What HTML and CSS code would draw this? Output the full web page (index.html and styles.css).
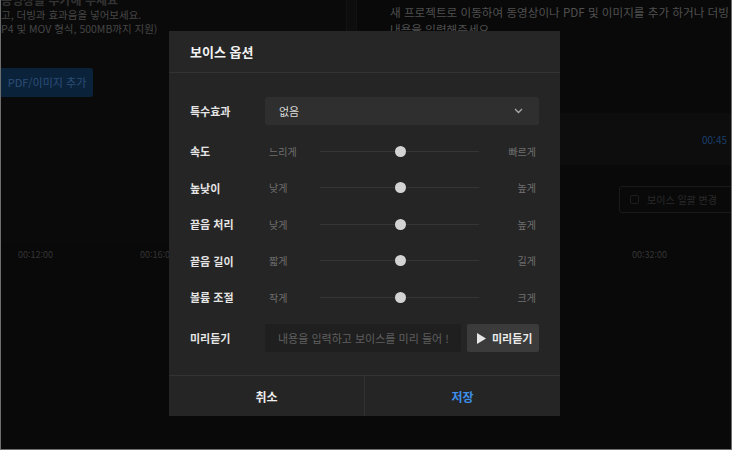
FILE: index.html
```html
<!DOCTYPE html>
<html lang="ko">
<head>
<meta charset="utf-8">
<title>보이스 옵션</title>
<link rel="stylesheet" href="styles.css">
</head>
<body>
<div class="app">
  <div class="top">
    <div class="left">
      <div class="cut-title">동영상을 추가해 주세요</div>
      <div class="bg-text">고, 더빙과 효과음을 넣어보세요.</div>
      <div class="bg-text">P4 및 MOV 형식, 500MB까지 지원)</div>
      <div class="bg-btn">PDF/이미지 추가</div>
    </div>
    <div class="divider"></div>
    <div class="right">
      <div class="bg-text2">새 프로젝트로 이동하여 동영상이나 PDF 및 이미지를 추가 하거나 더빙</div>
      <div class="bg-text2">내용을 입력해주세요.</div>
      <div class="band"><span class="time-blue">00:45</span></div>
      <div class="bulk-btn"><span class="bulk-ico"></span>보이스 일괄 변경</div>
    </div>
  </div>
  <div class="timeline">
    <span class="tl tl1">00:12:00</span>
    <span class="tl tl2">00:16:00</span>
    <span class="tl tl3">00:32:00</span>
  </div>

  <div class="modal">
    <div class="modal-head">보이스 옵션</div>
    <div class="modal-body">
      <div class="row row-select">
        <div class="label">특수효과</div>
        <div class="select">
          <span>없음</span>
          <svg class="chev" width="9" height="6" viewBox="0 0 9 6"><path d="M1 1 L4.5 4.5 L8 1" fill="none" stroke="#aaa" stroke-width="1.3"/></svg>
        </div>
      </div>
      <div class="row row-slider">
        <div class="label">속도</div>
        <div class="slider"><span class="s-min">느리게</span><div class="track"><span class="knob"></span></div><span class="s-max">빠르게</span></div>
      </div>
      <div class="row row-slider">
        <div class="label">높낮이</div>
        <div class="slider"><span class="s-min">낮게</span><div class="track"><span class="knob"></span></div><span class="s-max">높게</span></div>
      </div>
      <div class="row row-slider">
        <div class="label">끝음 처리</div>
        <div class="slider"><span class="s-min">낮게</span><div class="track"><span class="knob"></span></div><span class="s-max">높게</span></div>
      </div>
      <div class="row row-slider">
        <div class="label">끝음 길이</div>
        <div class="slider"><span class="s-min">짧게</span><div class="track"><span class="knob"></span></div><span class="s-max">길게</span></div>
      </div>
      <div class="row row-slider">
        <div class="label">볼륨 조절</div>
        <div class="slider"><span class="s-min">작게</span><div class="track"><span class="knob"></span></div><span class="s-max">크게</span></div>
      </div>
      <div class="row row-preview">
        <div class="label">미리듣기</div>
        <div class="preview">
          <div class="preview-input">내용을 입력하고 보이스를 미리 들어 !</div>
          <div class="preview-btn">
            <svg width="9" height="11" viewBox="0 0 9 11"><path d="M0 0 L9 5.5 L0 11 Z" fill="#e8e8e8"/></svg>
            <span>미리듣기</span>
          </div>
        </div>
      </div>
    </div>
    <div class="modal-foot">
      <div class="foot-btn cancel">취소</div>
      <div class="foot-btn save">저장</div>
    </div>
  </div>
</div>
</body>
</html>
```

FILE: styles.css
```css
* { box-sizing: border-box; margin: 0; padding: 0; }
html, body { width: 732px; height: 450px; overflow: hidden; background: #0a0a0a; }
body { font-family: "Noto Sans CJK KR", "Noto Sans", sans-serif; }

.app {
  position: relative;
  width: 732px;
  height: 450px;
  background: #090909;
  border-left: 1px solid #6e6e6e;
  border-right: 1px solid #6e6e6e;
  border-bottom: 1px solid #6e6e6e;
  overflow: hidden;
}

.top { display: flex; height: 242px; }
.left { width: 345px; background: #0a0a0a; display: flex; flex-direction: column; }
.cut-title { margin-top: -7px; height: 15px; font-size: 12px; font-weight: 700; color: #333; line-height: 14px; overflow: hidden; white-space: nowrap; }
.bg-text { font-size: 10.5px; line-height: 14px; color: #464646; white-space: nowrap; }
.bg-btn {
  margin-top: 32px; width: 92px; height: 29px;
  background: #0b223b; color: #2b4f78;
  font-size: 11px; line-height: 29px; text-align: center;
  border-radius: 0 3px 3px 0;
}
.divider { width: 11px; background: #0d0d0d; border-left: 1px solid #121212; border-right: 1px solid #121212; }
.right { flex: 1; display: flex; flex-direction: column; padding-left: 33px; }
.bg-text2 { font-size: 11.6px; line-height: 17px; color: #505050; white-space: nowrap; }
.bg-text2:first-child { margin-top: 4px; }
.band {
  margin-top: 75px; margin-left: -33px; height: 52px;
  background: #0d0d0d; display: flex; align-items: center; justify-content: flex-end;
}
.time-blue { font-size: 10px; color: #1b3f6a; margin-right: 4px; }
.bulk-btn {
  align-self: flex-end; margin-top: 21px; margin-right: -12px;
  width: 124px; height: 27px; border: 1px solid #1a1a1a; border-radius: 3px;
  font-size: 10px; color: #2a2a2a; display: flex; align-items: center; padding-left: 10px; gap: 8px;
}
.bulk-ico { width: 9px; height: 9px; border: 1px solid #1e1e1e; border-radius: 2px; }

.timeline { position: relative; height: 26px; font-size: 9px; color: #353535; }
.tl { position: absolute; top: 6px; }
.tl1 { left: 17px; }
.tl2 { left: 139px; }
.tl3 { left: 631px; }

/* Modal */
.modal {
  position: absolute; left: 168px; top: 31px;
  width: 391px; height: 385px;
  background: #252525;
  display: flex; flex-direction: column;
}
.modal-head {
  height: 42px; padding-left: 21px;
  font-size: 13px; font-weight: 700; color: #f2f2f2;
  line-height: 41px;
  border-bottom: 1px solid #333;
  background: #262626;
}
.modal-body { flex: 1; padding: 24px 21px 0 21px; display: flex; flex-direction: column; }
.row { display: flex; align-items: center; }
.label { width: 75px; flex: none; font-size: 11px; font-weight: 700; color: #e6e6e6; white-space: nowrap; }
.row-select { height: 28px; }
.select {
  flex: 1; height: 28px; background: #2f2f2f; border-radius: 2px;
  display: flex; align-items: center; justify-content: space-between;
  padding: 0 16px 0 14px; font-size: 11px; color: #dcdcdc;
}
.chev { display: block; }
.row-slider { height: 36.5px; }
.row-slider:nth-child(2) { margin-top: 8px; }
.slider { flex: 1; display: flex; align-items: center; padding: 0 3px 0 4px; font-size: 10px; color: #6f6f6f; }
.s-min { width: 51px; flex: none; white-space: nowrap; }
.s-max { width: 57px; flex: none; text-align: right; white-space: nowrap; }
.track { width: 159px; flex: none; height: 1px; background: #353535; position: relative; }
.knob {
  position: absolute; left: 75px; top: -5px;
  width: 11px; height: 11px; border-radius: 50%; background: #d3d3d3;
}
.row-preview { margin-top: 8.5px; height: 28px; }
.preview { flex: 1; display: flex; gap: 6px; height: 28px; }
.preview-input {
  flex: 1; background: #1f1f1f; border-radius: 2px;
  font-size: 11px; color: #5f5f5f; line-height: 28px; padding-left: 13px; white-space: nowrap; overflow: hidden;
}
.preview-btn {
  width: 72px; flex: none; background: #3b3b3b; border-radius: 2px;
  display: flex; align-items: center; gap: 6px; padding-left: 10px;
  font-size: 11px; font-weight: 700; color: #ececec;
}
.preview-btn svg { display: block; }
.modal-foot { height: 41px; display: flex; border-top: 1px solid #333; }
.foot-btn { flex: 1; display: flex; align-items: center; justify-content: center; font-size: 12px; font-weight: 700; }
.cancel { color: #eeeeee; border-right: 1px solid #333; }
.save { color: #3d8fe8; }
```
